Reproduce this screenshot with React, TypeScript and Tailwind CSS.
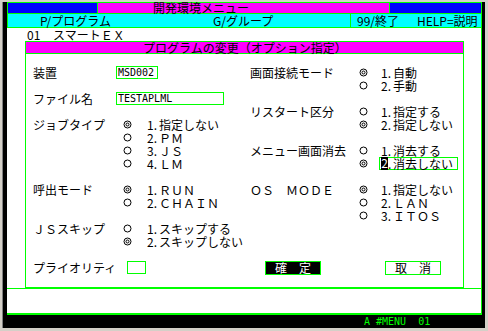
import React from "react";

function Radio({ on }: { on?: boolean }) {
  return (
    <svg width="9" height="9" viewBox="0 0 9 9" className="block shrink-0">
      <circle cx="4.5" cy="4.5" r="3.5" fill="none" stroke="#000" strokeWidth="1" />
      {on && <circle cx="4.5" cy="4.5" r="1.5" fill="none" stroke="#000" strokeWidth="1" />}
    </svg>
  );
}

function Opt({ n, t }: { n: string; t: string }) {
  return (
    <span className="flex whitespace-nowrap">
      <span className="w-[12px]">{n}.</span>
      <span>{t}</span>
    </span>
  );
}

function LeftOpt({ label, on, n, t }: { label?: string; on?: boolean; n: string; t: string }) {
  return (
    <div className="flex items-center">
      <span className="w-[90px] whitespace-nowrap">{label ?? ""}</span>
      <span className="w-[24px]">
        <Radio on={on} />
      </span>
      <Opt n={n} t={t} />
    </div>
  );
}

function RightOpt({ label, on, n, t }: { label?: string; on?: boolean; n: string; t: string }) {
  return (
    <div className="flex items-center">
      <span className="w-[109px] whitespace-nowrap">{label ?? ""}</span>
      <span className="w-[22px]">
        <Radio on={on} />
      </span>
      <Opt n={n} t={t} />
    </div>
  );
}

function Row({ left, right }: { left?: React.ReactNode; right?: React.ReactNode }) {
  return (
    <div className="flex h-[13px] items-center leading-[13px]">
      <div className="flex w-[224px] items-center pl-[7px]">{left}</div>
      <div className="flex flex-1 items-center">{right}</div>
    </div>
  );
}

export default function App() {
  return (
    <div className="h-[331px] w-[488px] bg-[#d4d0c8] pb-[3px] pl-[2px] pr-[3px] pt-[2px] font-['Noto_Sans_CJK_JP',sans-serif] text-[12px] text-black">
      <div className="flex h-full border-l border-[#808080] bg-black pl-[4px] pr-[3px]">
        <div className="flex w-[475px] flex-col">
          {/* title bar */}
          <div className="flex h-[12px] border border-[#00ff00]">
            <div className="w-[89px] bg-[#0000ff]" />
            <div className="flex w-[293px] items-center border-x border-[#00ff00] bg-[#ff00ff] pl-[55px] leading-[10px] whitespace-nowrap">
              開発環境メニュー
            </div>
            <div className="flex-1 bg-[#0000ff]" />
          </div>
          {/* function bar */}
          <div className="flex h-[14px] border-x border-b border-[#00ff00] bg-[#00ffff] leading-[13px]">
            <div className="flex w-[342px] items-center pl-[32px] whitespace-nowrap">
              <span className="w-[173px]">P/プログラム</span>
              <span>G/グループ</span>
            </div>
            <div className="flex flex-1 items-center border-l border-[#00ff00] pl-[6px] whitespace-nowrap">
              <span className="w-[60px]">99/終了</span>
              <span>HELP=説明</span>
            </div>
          </div>
          {/* white screen */}
          <div className="flex h-[285px] flex-col border-r border-[#00ff00] bg-white">
            <div className="flex h-[13px] items-center pl-[20px] leading-[13px] whitespace-nowrap">
              <span className="w-[26px]">01</span>
              <span>スマートＥＸ</span>
            </div>
            <div className="ml-[18px] w-[439px]">
              <div className="flex h-[13px] items-center border border-[#00ff00] bg-[#ff00ff] pl-[117px] leading-[11px] whitespace-nowrap">
                プログラムの変更（オプション指定）
              </div>
              <div className="border-x border-b border-[#00ff00] pb-[13px] pt-[12px]">
                <Row
                  left={
                    <div className="flex items-center">
                      <span className="w-[83px]">装置</span>
                      <span className="flex h-[13px] w-[42px] items-center border border-[#00ff00] pl-[1px] font-['DejaVu_Sans_Mono',monospace] text-[10px] leading-[11px]">
                        MSD002
                      </span>
                    </div>
                  }
                  right={<RightOpt label="画面接続モード" on n="1" t="自動" />}
                />
                <Row right={<RightOpt n="2" t="手動" />} />
                <Row
                  left={
                    <div className="flex items-center">
                      <span className="w-[83px]">ファイル名</span>
                      <span className="flex h-[13px] w-[108px] items-center border border-[#00ff00] pl-[1px] font-['DejaVu_Sans_Mono',monospace] text-[10px] leading-[11px]">
                        TESTAPLML
                      </span>
                    </div>
                  }
                />
                <Row right={<RightOpt label="リスタート区分" n="1" t="指定する" />} />
                <Row
                  left={<LeftOpt label="ジョブタイプ" on n="1" t="指定しない" />}
                  right={<RightOpt on n="2" t="指定しない" />}
                />
                <Row left={<LeftOpt n="2" t="ＰＭ" />} />
                <Row
                  left={<LeftOpt n="3" t="ＪＳ" />}
                  right={<RightOpt label="メニュー画面消去" n="1" t="消去する" />}
                />
                <Row
                  left={<LeftOpt n="4" t="ＬＭ" />}
                  right={
                    <div className="flex items-center">
                      <span className="w-[109px]" />
                      <span className="w-[20px]">
                        <Radio on />
                      </span>
                      <span className="flex h-[13px] w-[79px] items-center border border-[#00ff00] pl-[1px] whitespace-nowrap">
                        <span className="flex w-[12px]">
                          <span className="w-[7px] bg-black text-center leading-[11px] text-white">2</span>
                          <span>.</span>
                        </span>
                        <span>消去しない</span>
                      </span>
                    </div>
                  }
                />
                <Row />
                <Row
                  left={<LeftOpt label="呼出モード" on n="1" t="ＲＵＮ" />}
                  right={<RightOpt label="ＯＳ　ＭＯＤＥ" on n="1" t="指定しない" />}
                />
                <Row left={<LeftOpt n="2" t="ＣＨＡＩＮ" />} right={<RightOpt n="2" t="ＬＡＮ" />} />
                <Row right={<RightOpt n="3" t="ＩＴＯＳ" />} />
                <Row left={<LeftOpt label="ＪＳスキップ" n="1" t="スキップする" />} />
                <Row left={<LeftOpt on n="2" t="スキップしない" />} />
                <Row />
                <Row
                  left={
                    <div className="flex items-center">
                      <span className="w-[94px]">プライオリティ</span>
                      <span className="h-[13px] w-[19px] border border-[#00ff00]" />
                    </div>
                  }
                  right={
                    <div className="flex items-center">
                      <span className="ml-[15px] flex h-[14px] w-[56px] items-center justify-center border border-[#00ff00] bg-black leading-[12px] text-white">
                        確　定
                      </span>
                      <span className="ml-[64px] flex h-[14px] w-[56px] items-center justify-center border border-[#00ff00] bg-white leading-[12px]">
                        取　消
                      </span>
                    </div>
                  }
                />
              </div>
            </div>
            <div className="h-[1px] bg-[#00ff00]" />
          </div>
          <div className="h-[2px] bg-[#00ff00]" />
          {/* status */}
          <div className="flex h-[13px] items-center bg-black pl-[357px] font-['DejaVu_Sans_Mono',monospace] text-[10px] leading-[13px] whitespace-pre text-[#00ff00]">
            A #MENU  01
          </div>
        </div>
      </div>
    </div>
  );
}
